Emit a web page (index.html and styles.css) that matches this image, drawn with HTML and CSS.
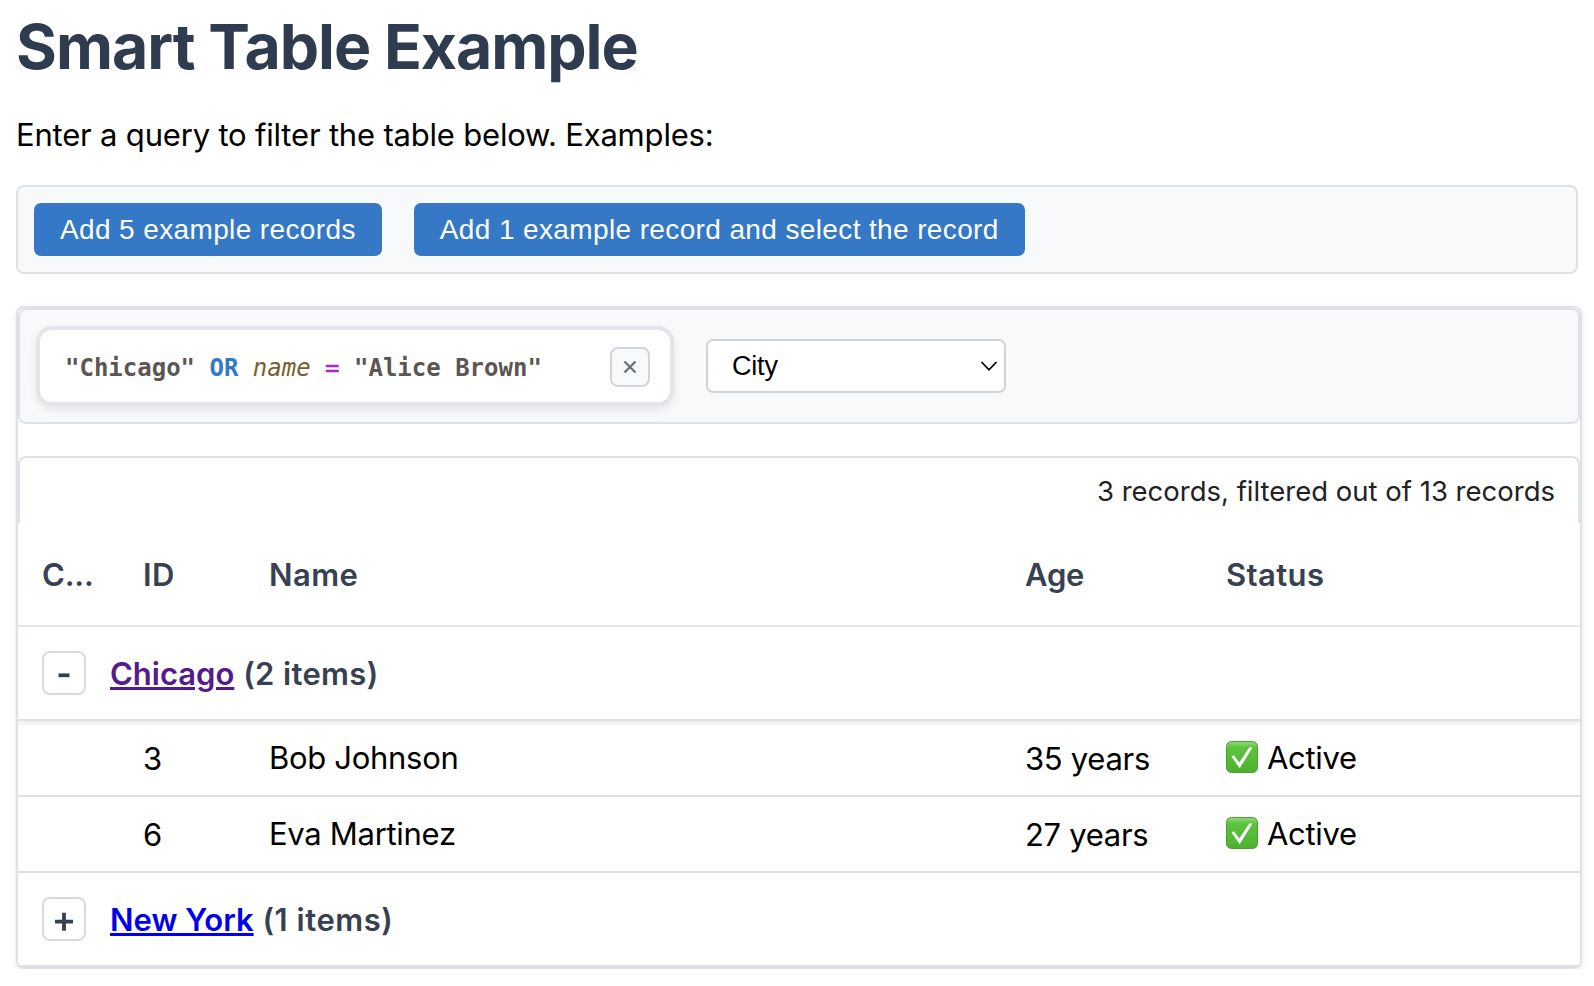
FILE: index.html
```html
<!DOCTYPE html>
<html lang="en">
<head>
<meta charset="utf-8">
<title>Smart Table Example</title>
<link rel="stylesheet" href="styles.css">
</head>
<body>
<h1 class="title">Smart Table Example</h1>
<p class="intro">Enter a query to filter the table below. Examples:</p>
<div class="toolbar">
  <button class="btn">Add 5 example records</button>
  <button class="btn">Add 1 example record and select the record</button>
</div>
<div class="smart-table">
  <div class="filter-bar">
    <div class="query">
      <code class="query-text"><b>"Chicago"</b> <b class="op">OR</b> <i>name</i> <span class="eq">=</span> <b>"Alice Brown"</b></code>
      <button class="clear" aria-label="Clear"><svg width="14" height="14" viewBox="0 0 14 14"><path d="M1.500 1.500l11 11M12.500 1.500l-11 11"/></svg></button>
    </div>
    <div class="select"><span>City</span><svg width="18" height="12" viewBox="0 0 18 12"><path d="M1.500 2L9 9.800 16.500 2"/></svg></div>
  </div>
  <div class="summary">3 records, filtered out of 13 records</div>
  <div class="grid-row head"><span class="tight">C...</span><span>ID</span><span>Name</span><span class="tight">Age</span><span>Status</span></div>
  <div class="group open"><button class="toggle"><svg width="18" height="18" viewBox="0 0 18 18"><path d="M3.500 11.300h11"/></svg></button><div class="label"><a class="visited" href="#chicago">Chicago</a> <span>(2 items)</span></div></div>
  <div class="grid-row item"><span></span><span class="num">3</span><span>Bob Johnson</span><span class="num">35 years</span><span class="status"><svg class="check" width="32" height="32" viewBox="0 0 32 32"><use href="#check"/></svg><span>Active</span></span></div>
  <div class="grid-row item"><span></span><span class="num">6</span><span>Eva Martinez</span><span class="num">27 years</span><span class="status"><svg class="check" width="32" height="32" viewBox="0 0 32 32"><use href="#check"/></svg><span>Active</span></span></div>
  <div class="group"><button class="toggle"><svg width="18" height="18" viewBox="0 0 18 18"><path d="M0 11.700h18M9 2.700v18"/></svg></button><div class="label"><a href="#new-york">New York</a> <span class="one">(1 items)</span></div></div>
</div>
<svg class="defs" width="0" height="0">
  <defs>
    <linearGradient id="green" x1="0" y1="0" x2="0" y2="1"><stop offset="0" stop-color="#8fdc76"/><stop offset=".2" stop-color="#5cc43e"/><stop offset="1" stop-color="#4fb030"/></linearGradient>
    <g id="check"><rect x=".5" y=".5" width="31" height="31" rx="5" fill="url(#green)" stroke="#4a9e33"/><path d="M5.500 15.500l2.300-1.200 5.500 7.200L23.200 6.500h3.300L13.700 27.300z" fill="#fff"/></g>
  </defs>
</svg>
</body>
</html>
```
FILE: styles.css
```css
body { margin: 0; padding: 0 16px; background: #fff; color: #000; font: 31px/48px Inter, sans-serif; }
.title { margin: 7px 0 0; font-size: 62.5px; line-height: 78px; font-weight: 700; letter-spacing: -1.04px; color: #2f3c4f; }
.intro { margin: 26px 0 26px; letter-spacing: -.19px; }
.toolbar { display: flex; gap: 32px; box-sizing: border-box; width: 1562px; height: 89px; padding: 16px; border: 2px solid #dee2e6; border-radius: 8px; background: #f8f9fb; }
.btn { height: 53px; padding: 0 26px; border: 0; border-radius: 7px; background: #3578c6; color: #fff; font: 28px/52px "Liberation Sans", Arial, sans-serif; letter-spacing: .375px; }
.smart-table { box-sizing: border-box; width: 1566px; height: 663px; margin-top: 32px; border: 2px solid #dee2e6; border-radius: 8px; box-shadow: 0 2px 6px rgba(0,0,0,.1); }
.filter-bar { display: flex; align-items: center; gap: 32px; box-sizing: border-box; height: 116px; padding: 0 16px; border: 2px solid #dee2e6; border-radius: 8px; background: #f8f9fb; }
.query { display: flex; align-items: center; justify-content: space-between; box-sizing: border-box; width: 638px; height: 80px; padding: 2px 20px 0 25px; border: 4px solid #e2e5ea; border-radius: 16px; background: #fff; box-shadow: 0 4px 8px rgba(0,0,0,.08); }
.query-text { padding-top: 2px; font: 24px/40px "DejaVu Sans Mono", monospace; color: #5c5552; white-space: pre; }
.query-text .op { color: #3578c6; }
.query-text i { color: #775f2e; }
.query-text .eq { color: #a626d4; -webkit-text-stroke: .5px #a626d4; }
.clear { display: flex; align-items: center; justify-content: center; box-sizing: border-box; width: 40px; height: 40px; padding: 0; border: 2px solid #d1d5db; border-radius: 8px; background: #f8f9fb; }
.clear path { fill: none; stroke: #6b7280; stroke-width: 2.4; }
.select { display: flex; align-items: center; justify-content: space-between; box-sizing: border-box; width: 300px; height: 54px; padding: 0 6px 0 24px; border: 2px solid #ced4da; border-radius: 7px; background: #fff; font: 27px/50px "Liberation Sans", Arial, sans-serif; letter-spacing: -.2px; }
.select path { fill: none; stroke: #000; stroke-width: 1.7; }
.summary { box-sizing: border-box; height: 67px; margin-top: 32px; padding: 9px 23px 0; border: 2px solid #dee2e6; border-bottom: 0; border-radius: 8px 8px 0 0; color: #222; font-size: 27.5px; text-align: right; }
.grid-row { display: grid; grid-template-columns: 101px 126px 756px 201px 1fr; box-sizing: border-box; padding-left: 24px; border-bottom: 2px solid #dee2e6; white-space: nowrap; }
.head { height: 104px; padding-top: 28px; font-weight: 600; letter-spacing: .4px; color: #374151; border-color: #e4e7eb; }
.head .tight { letter-spacing: -.2px; }
.item { height: 76px; padding-top: 13px; letter-spacing: -.3px; }
.num { position: relative; top: 1px; }
.status { display: flex; gap: 9px; }
.check { margin-top: 7px; }
.group { display: flex; align-items: center; gap: 24px; box-sizing: border-box; height: 94px; padding-left: 24px; border-bottom: 2px solid #dee2e6; font-weight: 600; color: #374151; }
.group.open { box-shadow: 0 2px 6px rgba(0,0,0,.1); clip-path: inset(0 0 -12px 0); }
.toggle { display: flex; align-items: center; justify-content: center; box-sizing: border-box; width: 44px; height: 44px; padding: 0; border: 2px solid #d6dae0; border-radius: 8px; background: #fff; }
.toggle svg { overflow: visible; }
.toggle path { fill: none; stroke: #374151; stroke-width: 3.8; }
.label { padding-top: 2px; }
.label span { margin-left: 1px; letter-spacing: .35px; }
.label .one { letter-spacing: .55px; }
.label a { color: #0000ee; text-decoration: underline; text-decoration-thickness: 3px; }
.label .visited { color: #551a8b; }
.defs { position: absolute; }
```
